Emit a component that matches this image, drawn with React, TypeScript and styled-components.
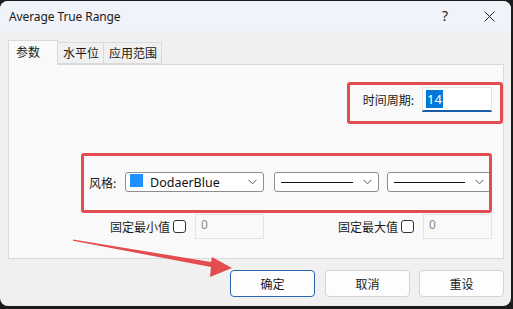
import React from "react";
import styled, { createGlobalStyle } from "styled-components";

const Global = createGlobalStyle`
  html, body { margin: 0; padding: 0; background: #1c1c1c; overflow: hidden; }
  body { width: 513px; height: 309px; font-family: "Noto Sans", "Noto Sans CJK SC", sans-serif; }
`;

const Window = styled.div`
  position: relative;
  margin-top: 1px;
  width: 511px;
  height: 305px;
  background: #f0f0f0;
  border-radius: 8px;
  overflow: hidden;
  display: flex;
  flex-direction: column;
  color: #1a1a1a;
  font-size: 12px;
`;

const TitleBar = styled.div`
  height: 30px;
  background: #f0f3f9;
  display: flex;
  align-items: center;
  padding-left: 9px;
  flex-shrink: 0;
`;

const Title = styled.div`
  flex: 1;
  font-family: "Noto Sans", sans-serif;
  font-size: 12px;
  color: #1a1a1a;
  letter-spacing: -0.1px;
`;

const Help = styled.div`
  width: 8px;
  font-size: 14px;
  font-family: "Noto Sans", sans-serif;
  color: #222;
  margin-right: 34px;
  margin-top: -1px;
`;

const Close = styled.div`
  width: 11px;
  height: 11px;
  margin-right: 16px;
  display: flex;
`;

const Body = styled.div`
  flex: 1;
  display: flex;
  flex-direction: column;
  padding: 9px 7px 0 8px;
`;

const Tabs = styled.div`
  display: flex;
  align-items: flex-end;
  height: 24px;
`;

const Tab = styled.div<{ $active?: boolean; $w: number; $first?: boolean }>`
  box-sizing: border-box;
  height: ${(p) => (p.$active ? 25 : 22)}px;
  margin-bottom: ${(p) => (p.$active ? -1 : 0)}px;
  width: ${(p) => p.$w}px;
  background: ${(p) => (p.$active ? "#f9f9f9" : "#f0f0f0")};
  border: 1px solid #dadada;
  border-bottom: ${(p) => (p.$active ? "none" : "1px solid #dadada")};
  border-left: ${(p) => (p.$first || p.$active ? "1px solid #dadada" : "none")};
  padding-left: ${(p) => (p.$active ? 7 : 5)}px;
  padding-top: ${(p) => (p.$active ? 3 : 2)}px;
  font-family: "Noto Sans CJK SC", sans-serif;
  font-size: 12px;
  line-height: 16px;
  position: relative;
  z-index: ${(p) => (p.$active ? 1 : 0)};
`;

const Panel = styled.div`
  box-sizing: border-box;
  width: 496px;
  height: 195px;
  background: #f9f9f9;
  border: 1px solid #dadada;
  display: flex;
  flex-direction: column;
`;

const PeriodRow = styled.div`
  display: flex;
  justify-content: flex-end;
  align-items: center;
  margin-top: 22px;
  padding-right: 11px;
  height: 25px;
`;

const Label = styled.span<{ $w?: number }>`
  font-family: "Noto Sans CJK SC", sans-serif;
  font-size: 12px;
  color: #1a1a1a;
  white-space: nowrap;
  ${(p) => (p.$w ? `width: ${p.$w}px;` : "")}
`;

const PeriodInput = styled.div`
  box-sizing: border-box;
  width: 70px;
  height: 25px;
  margin-left: 8px;
  background: #fff;
  border: 1px solid #e4e4e4;
  border-bottom: 2px solid #1b5ea6;
  display: flex;
  align-items: center;
  padding-left: 3px;
`;

const Selected = styled.span`
  background: #0078d7;
  color: #fff;
  font-family: "Noto Sans", sans-serif;
  font-size: 13px;
  line-height: 18px;
  padding: 0 1px;
`;

const StyleRow = styled.div`
  display: flex;
  align-items: center;
  margin-top: 60px;
  padding-left: 80px;
  height: 20px;
`;

const Select = styled.div<{ $w: number; $ml: number }>`
  box-sizing: border-box;
  width: ${(p) => p.$w}px;
  height: 20px;
  margin-left: ${(p) => p.$ml}px;
  background: #fff;
  border: 1px solid #8e8e8e;
  border-radius: 3px;
  display: flex;
  align-items: center;
  padding: 0 6px 0 4px;
`;

const Swatch = styled.span`
  width: 13px;
  height: 13px;
  background: #1e90ff;
  margin-right: 6px;
  margin-top: -3px;
`;

const SelectText = styled.span`
  flex: 1;
  font-family: "Noto Sans", sans-serif;
  font-size: 12.5px;
  color: #111;
  margin-left: 1px;
`;

const LineSample = styled.span`
  flex: 1;
  height: 1px;
  background: #111;
  margin: 0 10px 0 2px;
`;

const Chevron = () => (
  <svg width="9" height="6" viewBox="0 0 9 6">
    <polyline points="0.5,0.8 4.5,4.8 8.5,0.8" fill="none" stroke="#555" strokeWidth="1" />
  </svg>
);

const FixRow = styled.div`
  display: flex;
  align-items: center;
  margin-top: 22px;
  padding-left: 101px;
  height: 25px;
`;

const FieldGroup = styled.div<{ $ml?: number }>`
  display: flex;
  align-items: center;
  margin-left: ${(p) => p.$ml || 0}px;
`;

const Check = styled.span`
  box-sizing: border-box;
  width: 13px;
  height: 13px;
  border: 1px solid #333;
  border-radius: 3px;
  margin-left: 3px;
  background: #fff;
`;

const DisabledInput = styled.div`
  box-sizing: border-box;
  width: 69px;
  height: 25px;
  margin-left: 9px;
  border: 1px solid #e3e3e3;
  background: #f9f9f9;
  color: #8a8a8a;
  font-family: "Noto Sans", sans-serif;
  font-size: 12px;
  padding: 2px 0 0 5px;
  line-height: 16px;
`;

const Buttons = styled.div`
  display: flex;
  justify-content: flex-end;
  gap: 9px;
  margin-top: 11px;
`;

const Button = styled.div<{ $primary?: boolean }>`
  box-sizing: border-box;
  width: 85px;
  height: 27px;
  background: #fdfdfd;
  border: 1px solid ${(p) => (p.$primary ? "#2a66b0" : "#d3d3d3")};
  border-radius: 4px;
  display: flex;
  align-items: center;
  justify-content: center;
  font-family: "Noto Sans CJK SC", sans-serif;
  font-size: 12px;
  color: #1a1a1a;
  margin-right: ${(p) => (p.$primary ? 1 : 0)}px;
`;

const Annotation = styled.div<{ $x: number; $y: number; $w: number; $h: number }>`
  position: absolute;
  left: ${(p) => p.$x}px;
  top: ${(p) => p.$y}px;
  width: ${(p) => p.$w}px;
  height: ${(p) => p.$h}px;
  box-sizing: border-box;
  border: 3px solid #e34d4f;
  border-radius: 3px;
  pointer-events: none;
`;

const ArrowLayer = styled.svg`
  position: absolute;
  left: 0;
  top: -1px;
  pointer-events: none;
`;

export default function App() {
  return (
    <>
      <Global />
      <Window>
        <TitleBar>
          <Title>Average True Range</Title>
          <Help>?</Help>
          <Close>
            <svg width="11" height="11" viewBox="0 0 11 11">
              <line x1="0.5" y1="0.5" x2="10.5" y2="10.5" stroke="#222" strokeWidth="1" />
              <line x1="10.5" y1="0.5" x2="0.5" y2="10.5" stroke="#222" strokeWidth="1" />
            </svg>
          </Close>
        </TitleBar>
        <Body>
          <Tabs>
            <Tab $active $w={50}>参数</Tab>
            <Tab $w={46}>水平位</Tab>
            <Tab $w={58}>应用范围</Tab>
          </Tabs>
          <Panel>
            <PeriodRow>
              <Label>时间周期:</Label>
              <PeriodInput>
                <Selected>14</Selected>
              </PeriodInput>
            </PeriodRow>
            <StyleRow>
              <Label $w={36}>风格:</Label>
              <Select $w={139} $ml={0}>
                <Swatch />
                <SelectText>DodaerBlue</SelectText>
                <Chevron />
              </Select>
              <Select $w={105} $ml={10}>
                <LineSample />
                <Chevron />
              </Select>
              <Select $w={104} $ml={8}>
                <LineSample />
                <Chevron />
              </Select>
            </StyleRow>
            <FixRow>
              <FieldGroup>
                <Label $w={60}>固定最小值</Label>
                <Check />
                <DisabledInput>0</DisabledInput>
              </FieldGroup>
              <FieldGroup $ml={74}>
                <Label $w={60}>固定最大值</Label>
                <Check />
                <DisabledInput>0</DisabledInput>
              </FieldGroup>
            </FixRow>
          </Panel>
          <Buttons>
            <Button $primary>确定</Button>
            <Button>取消</Button>
            <Button>重设</Button>
          </Buttons>
        </Body>
        <Annotation $x={347} $y={81} $w={156} $h={42} />
        <Annotation $x={81} $y={152} $w={411} $h={60} />
        <ArrowLayer width="511" height="306" viewBox="0 0 511 306">
          <polygon
            points="73,239.5 211,262 212,257 232,268 210,277 211,267 73,240.8"
            fill="#e34d4f"
          />
        </ArrowLayer>
      </Window>
    </>
  );
}
